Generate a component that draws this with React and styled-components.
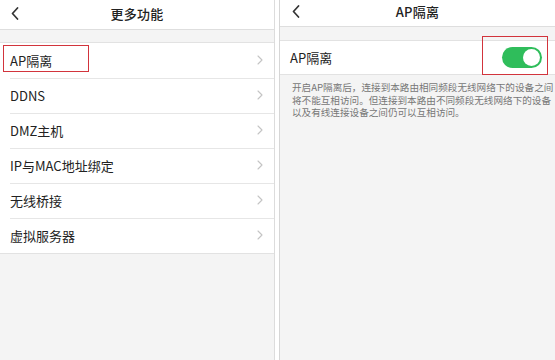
import React from 'react';
import styled, { createGlobalStyle } from 'styled-components';

const GlobalStyle = createGlobalStyle`
  html, body {
    margin: 0;
    padding: 0;
    background: #fff;
  }
  body {
    font-family: "Noto Sans CJK SC", "Noto Sans", sans-serif;
    color: #222;
  }
`;

const Screen = styled.div`
  display: flex;
  gap: 4px;
  width: 555px;
  height: 360px;
  overflow: hidden;
  background: #fff;
`;

const Panel = styled.section`
  display: flex;
  flex-direction: column;
  background: #f4f4f4;
  box-sizing: border-box;
  min-width: 0;
  ${props => (props.side === 'left'
    ? 'width: 275px; flex-shrink: 0; border-right: 1px solid #dcdcdc;'
    : 'flex: 1; border-left: 1px solid #d6d6d6;')}
`;

const Header = styled.header`
  position: relative;
  display: flex;
  align-items: center;
  justify-content: center;
  height: ${props => props.h}px;
  box-sizing: content-box;
  padding-bottom: 0;
  background: #fff;
  border-bottom: 1px solid #dedede;
  flex-shrink: 0;

  h1 {
    margin: 0 0 3px;
    font-size: 13px;
    font-weight: 500;
    color: #222;
    letter-spacing: 0.3px;
  }
`;

const Back = styled.span`
  position: absolute;
  left: ${props => props.x}px;
  top: ${props => props.y}px;
  display: flex;
`;

const Band = styled.div`
  height: ${props => props.h}px;
  flex-shrink: 0;
`;

const List = styled.ul`
  margin: 0;
  padding: 0;
  list-style: none;
  background: #fff;
  border-top: 1px solid #e2e2e2;
  border-bottom: 1px solid #e2e2e2;
`;

const Row = styled.li`
  position: relative;
  display: flex;
  align-items: center;
  justify-content: space-between;
  height: ${props => props.h || 35}px;
  box-sizing: border-box;
  padding: 0 11px 1px 10px;
  font-size: 13px;
  color: #222;

  & + &::before {
    content: '';
    position: absolute;
    left: 10px;
    right: 0;
    top: 0;
    border-top: 1px solid #e6e6e6;
  }
`;

const Highlight = styled.span`
  position: absolute;
  left: ${props => props.x}px;
  top: ${props => props.y}px;
  width: ${props => props.w}px;
  height: ${props => props.h}px;
  box-sizing: border-box;
  border: 1.5px solid #d2343c;
  pointer-events: none;
`;

const Toggle = styled.span`
  position: relative;
  width: 40px;
  height: 21px;
  border-radius: 11px;
  background: #2fbd5b;
  margin-right: 2px;

  &::after {
    content: '';
    position: absolute;
    right: 2px;
    top: 2px;
    width: 17px;
    height: 17px;
    border-radius: 50%;
    background: #fff;
  }
`;

const Note = styled.p`
  margin: 0;
  padding: 6px 6px 0 12px;
  font-size: 9.6px;
  line-height: 12.5px;
  color: #777;

  span {
    display: block;
    white-space: nowrap;
  }
`;

const BackIcon = () => (
  <svg width="8" height="13" viewBox="0 0 8 13">
    <polyline points="6.5,1 1.5,6.5 6.5,12" fill="none" stroke="#333" strokeWidth="1.7" strokeLinecap="round" strokeLinejoin="round" />
  </svg>
);

const Chevron = () => (
  <svg width="6" height="10" viewBox="0 0 6 10">
    <polyline points="1,1 5,5 1,9" fill="none" stroke="#c4c4c4" strokeWidth="1.1" strokeLinecap="round" strokeLinejoin="round" />
  </svg>
);

const items = ['AP隔离', 'DDNS', 'DMZ主机', 'IP与MAC地址绑定', '无线桥接', '虚拟服务器'];

const noteLines = [
  '开启AP隔离后，连接到本路由相同频段无线网络下的设备之间',
  '将不能互相访问。但连接到本路由不同频段无线网络下的设备',
  '以及有线连接设备之间仍可以互相访问。',
];

const App = () => (
  <>
    <GlobalStyle />
    <Screen>
      <Panel side="left">
        <Header h={29}>
          <Back x={11} y={7}><BackIcon /></Back>
          <h1>更多功能</h1>
        </Header>
        <Band h={12} />
        <List>
          {items.map((label, i) => (
            <Row key={label}>
              <span>{label}</span>
              <Chevron />
              {i === 0 && <Highlight x={3} y={2} w={86} h={27} />}
            </Row>
          ))}
        </List>
      </Panel>
      <Panel side="right">
        <Header h={26}>
          <Back x={12} y={5}><BackIcon /></Back>
          <h1>AP隔离</h1>
        </Header>
        <Band h={13} />
        <List>
          <Row h={33}>
            <span>AP隔离</span>
            <Toggle />
            <Highlight x={202} y={-5} w={66} h={39} />
          </Row>
        </List>
        <Note>
          {noteLines.map(line => (
            <span key={line}>{line}</span>
          ))}
        </Note>
      </Panel>
    </Screen>
  </>
);

export default App;
